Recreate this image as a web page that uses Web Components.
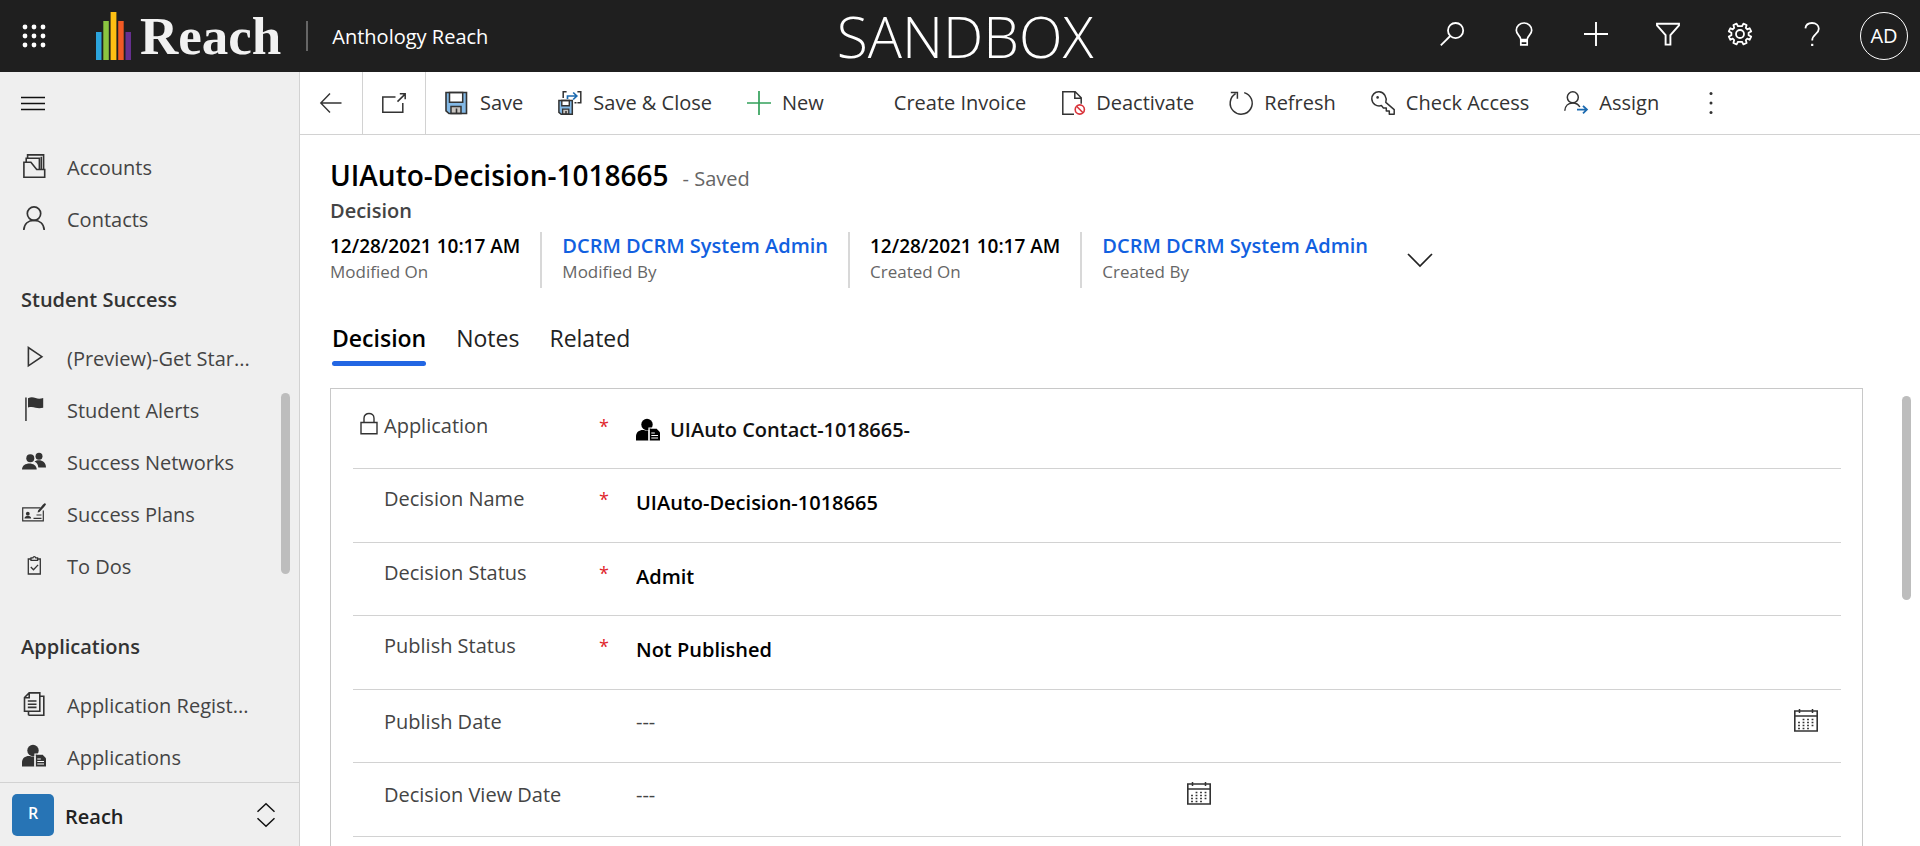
<!DOCTYPE html>
<html lang="en">
<head>
<meta charset="utf-8">
<title>Decision: UIAuto-Decision-1018665 - Anthology Reach</title>
<style>
  html, body { margin: 0; height: 100%; }
  body { font: 20px/28px "Open Sans", "Noto Sans", sans-serif; color: #333; background: #fff; overflow: hidden; }
</style>
</head>
<body>
<reach-app></reach-app>

<script>
const ICONS = {
  waffle: '<g fill="currentColor" stroke="none"><circle cx="3" cy="3" r="2.4"/><circle cx="12" cy="3" r="2.4"/><circle cx="21" cy="3" r="2.4"/><circle cx="3" cy="12" r="2.4"/><circle cx="12" cy="12" r="2.4"/><circle cx="21" cy="12" r="2.4"/><circle cx="3" cy="21" r="2.4"/><circle cx="12" cy="21" r="2.4"/><circle cx="21" cy="21" r="2.4"/></g>',
  search: '<g stroke-width="1.8"><circle cx="15.6" cy="8.6" r="7.6"/><path d="M10.2 14 .8 23.4"/></g>',
  bulb: '<g stroke-width="1.7"><path d="M8.8 17.6C8.8 13.6 4.3 13 4.3 8.2a7.7 7.2 0 0 1 15.4 0c0 4.8-4.5 5.4-4.5 9.4zM8.8 17.6v5.2h6.4v-5.2M8.8 19.4h6.4"/></g>',
  plus: '<path stroke-width="1.9" d="M12 0v24M0 12h24"/>',
  filter: '<path stroke-width="1.9" d="M1 1.8h22v1.6l-8.6 9.8v9.4H9.6v-9.4L1 3.4z"/>',
  gear: '<g stroke-width="1.8" stroke-linejoin="round"><path d="M10 4.2 8.6 1.6 5.4 3l.8 2.9-1.5 1.5L2.4 6.2.8 9.4l2.6 1.3v2.6L.8 14.6l1.6 3.2 2.3-1.2 1.5 1.5-.8 2.9 3.2 1.4L10 19.8h4l1.4 2.6 3.2-1.4-.8-2.9 1.5-1.5 2.3 1.2 1.6-3.2-2.6-1.3v-2.6l2.6-1.3-1.6-3.2-2.3 1.2-1.5-1.5.8-2.9-3.2-1.4L14 4.2z"/><circle cx="12" cy="12" r="4"/></g>',
  help: '<path stroke-width="1.8" d="M5.400 6.400C5.800 2.800 8.600 1 12 1c4 0 6.800 2.300 6.800 5.800 0 5.400-6.600 5.400-6.600 11.600"/><path stroke="none" fill="currentColor" d="M11.100 21.800h2.200V24h-2.200z"/>',
  menu: '<path stroke-width="1.500" d="M0 6.500h24M0 12.500h24M0 18.500h24"/>',
  back: '<path stroke-width="1.400" d="M22.500 12H1.800M11 2.500 1.800 12l9.200 9.500"/>',
  popout: '<path stroke-width="1.500" d="M13.500 6H.8v15.200h20V12M15.500 10.600 22.800 3.400M17.800 2.800h5.400v5.400"/>',
  save: '<path fill="#83b9e6" stroke="none" d="M1 1.500h20v21H3.500L1 20z"/><path fill="#fff" stroke-width="1.500" d="M4.500 1.500h13.200v9.700H4.500z"/><path fill="#c9c5c1" stroke-width="1.500" d="M6 22.500v-7h10v7z"/><path stroke-width="1.600" d="M1 1.500h20.500v21H4L1 19.800zM11.500 17.500v5"/>',
  saveclose: '<path fill="#83b9e6" stroke="none" d="M1 9.500h13v14H3L1 21.500z"/><path fill="#fff" stroke-width="1.400" d="M3.800 9.500h7.500v5.200H3.800z"/><path fill="#c9c5c1" stroke-width="1.300" d="M4.600 23.200v-5h6.200v5z"/><path stroke-width="1.500" d="M.9 9.500h13.400v13.800H3.200L.9 21.400zM8 20v3"/><path stroke-width="1.500" d="M8.600.8H5.200V7M19.400.8h3.400v11h-3.400M16.500 11.800h2"/><path stroke="#1b6ab0" stroke-width="1.700" d="M9.500 8V5h9M15.200 1.500 18.800 5l-3.600 3.500"/>',
  add: '<path stroke="#33a15b" stroke-width="1.700" d="M12 0v24M0 12h24"/>',
  none: '',
  deactivate: '<path stroke-width="1.500" d="M13 23.200H1.800V.8h12.400l6 6v6M13.800.8v6.400h6.400"/><g stroke="#d9333a" stroke-width="1.600" fill="#fff"><circle cx="18.800" cy="18.500" r="4.600"/><path d="m15.600 15.300 6.400 6.400"/></g>',
  refresh: '<path stroke-width="1.500" d="M15.200 1.600A11 11 0 1 1 6.600 2.700M1.800 1.600h6.600v6.200"/>',
  key: '<path stroke-width="1.500" stroke-linejoin="round" d="M14.800 11.400c1.500-5-1.600-10.300-6.700-10.600-4.400-.2-7.500 3.300-7.300 7.200.3 4.800 4.700 7.800 9.600 6.600l2 2.300h2.900v3h3v3.300h4.900v-4.600z"/><circle cx="6.600" cy="6.400" r="1.300" fill="currentColor" stroke="none"/>',
  assign: '<path stroke-width="1.500" d="M.8 19.800C1 14.600 4.500 12 8.800 12c3 0 5.600 1.400 7 4"/><circle cx="8.800" cy="6.300" r="5.500" stroke-width="1.500"/><path stroke="#1b6ab0" stroke-width="1.800" d="M13 18.600h9.800M19 14.900l3.900 3.700-3.900 3.700"/>',
  more: '<g fill="currentColor" stroke="none"><circle cx="12" cy="2.500" r="1.500"/><circle cx="12" cy="12" r="1.500"/><circle cx="12" cy="21.500" r="1.500"/></g>',
  accounts: '<g stroke-width="1.600"><path d="M1.900 23.200V8.200h7l5.800 7.300h8v7.700zM4.200 8V4.300h13.200v11"/><path d="M5.600 4V.9h16V15.300M19.300 15V2.800"/></g>',
  contacts: '<g stroke-width="1.700"><circle cx="12" cy="7.600" r="6.700"/><path d="M1.800 24c.3-6.300 4.600-9.700 10.200-9.700S21.900 17.700 22.200 24"/></g>',
  play: '<path stroke-width="1.600" d="M6.400 2.600v18.200l13.500-9.100z"/>',
  flag: '<path stroke="none" fill="currentColor" d="M3.200.5h1.500V24H3.200zM6 1.200C9 0 11 .2 13.600 1.100c2.600.8 5 .6 7.600 0v9.600c-2.600.6-5 .7-7.600 0-2.600-.8-4.600-1-7.600-.2z"/>',
  people: '<g fill="currentColor" stroke="none"><circle cx="17" cy="7.300" r="3.500"/><path d="M12.500 12.600c4-2.700 11.500-1.300 11.500 5.900h-7.700c-.2-2.700-1.500-4.800-3.800-5.900z"/><circle cx="8.300" cy="9.300" r="4"/><path d="M0 20.500c0-8 14.700-8 14.700 0z"/></g>',
  plans: '<g stroke-width="1.200"><path d="M18.500 6.800H.7v13h20.600V9.500M11.500 17.400h8M14.500 14h5"/></g><g fill="currentColor" stroke="none"><circle cx="5.800" cy="12.700" r="1.900"/><path d="M2.500 17.500c0-3.700 6.700-3.700 6.700 0zM21 3.500l2-1.400 1 1.400-1.700 2.300-4.800 5.100-1.900.6.500-2z"/></g>',
  todo: '<g stroke-width="1.300"><path d="M9 6H6.300v15h12V6h-2.700M9 4.800h1.900c.4-1.600 2.400-1.600 2.800 0h1.900v2.600H9z"/><path d="m8.800 14 2.700 2.800 4.600-4.900"/></g>',
  documents: '<g stroke-width="1.600"><path d="M7.200.9h10.600v18.300H2.500V5.500zM7.200.9v4.800H2.500M6.500 23.200h15.300V4.200h-4"/><path d="M5.800 9h8.700M5.800 12.200h8.700M5.800 15.400h8.700M6.500 19.600v3.600"/></g>',
  applicant: '<g fill="currentColor" stroke="none"><circle cx="11" cy="6.500" r="5.700"/><path d="M0 22.500v-4c0-5 4-7 8-6.500 1.200.8 3.600.8 5 0l-.6.6v9.900z"/><path d="M13.600 10.500h6.800L24 14.200v8.300H13.600z"/></g><path stroke="#fff" stroke-width="1.200" d="M13 22.500V10h7.600M15.300 15h3.500M15.300 17.500h6.700M15.300 20h6.700"/>',
  updown: '<path stroke-width="1.500" d="m3.500 8.700 8.500-8 8.500 8M3.500 15.300l8.500 8 8.500-8"/>',
  chevron: '<path stroke-width="1.700" d="M0 6l12 12L24 6"/>',
  lock: '<g stroke-width="1.400"><path d="M4 10.500h16v11.200H4zM7 10.500V6.300C7 -.2 17 -.2 17 6.300v4.200"/></g>',
  calendar: '<path stroke-width="1.600" d="M.8 3h22.400v20H.8zM.8 8h22.400"/><path stroke-width="1.500" d="M5.500 1v4M18.500 1v4"/><path stroke-width="1.500" stroke-dasharray="1.800 2.700" d="M8.600 11.500h12.500M4.100 14.500h17M4.100 17.500h17M4.100 20.500h12.500"/>'
};

const define = (name, html, setup) => customElements.define(name, class extends HTMLElement {
  constructor() {
    super();
    const template = document.createElement('template');
    template.innerHTML = html;
    this.attachShadow({ mode: 'open' }).append(template.content.cloneNode(true));
  }
  connectedCallback() { if (setup) setup(this, this.shadowRoot); }
});

define('reach-icon', `
<style>
  :host { display: block; flex: none; width: 24px; height: 24px; }
  svg { display: block; width: 100%; height: 100%; overflow: visible; }
</style>
<svg viewBox="0 0 24 24" fill="none" stroke="currentColor" aria-hidden="true"></svg>`,
(host, root) => { root.querySelector('svg').innerHTML = ICONS[host.getAttribute('name')]; });

define('reach-logo', `
<style>
  :host { display: flex; align-items: center; gap: 9px; color: #f1f1f1; }
  svg { display: block; width: 35px; height: 48px; }
  span { font: bold 53px/60px "Liberation Serif", serif; }
</style>
<svg viewBox="0 0 35 48" aria-hidden="true">
  <path fill="#2ba4dc" d="M0 20h5.500v28H0z"/><path fill="#8bc540" d="M7.300 9h5.500v39H7.300z"/>
  <path fill="#fdc013" d="M14.600 0h5.800v48h-5.800z"/><path fill="#f15a24" d="M22.200 9h5.500v39h-5.500z"/>
  <path fill="#66308f" d="M29.500 20H35v28h-5.500z"/>
</svg>
<span>Reach</span>`);

define('top-bar', `
<style>
  :host { display: grid; grid-template-columns: 1fr auto 1fr; align-items: center; height: 72px; padding-left: 10px; background: #1f1f1f; color: #fff; }
  .left, .right { display: flex; align-items: center; }
  .right { justify-content: flex-end; padding-right: 12px; }
  button { display: grid; place-items: center; box-sizing: border-box; width: 72px; height: 72px; margin: 0; padding: 0 0 4px; border: 0; background: none; color: inherit; font: inherit; cursor: pointer; }
  .waffle { width: 48px; padding: 0; }
  reach-logo { margin: 0 25px 0 38px; }
  .app { padding: 2px 0 0 24px; color: inherit; text-decoration: none; }
  .rule { width: 2px; height: 30px; background: #666; }
  .env { font-size: 57px; font-weight: 300; line-height: 72px; }
  .user { width: 48px; height: 48px; margin-left: 12px; padding: 0; border: 1px solid #fff; border-radius: 50%; }
</style>
<div class="left">
  <button class="waffle" aria-label="App launcher"><reach-icon name="waffle"></reach-icon></button>
  <reach-logo></reach-logo>
  <span class="rule"></span>
  <a class="app" href="#">Anthology Reach</a>
</div>
<div class="env">SANDBOX</div>
<div class="right">
  <button aria-label="Search"><reach-icon name="search"></reach-icon></button>
  <button aria-label="Assistant"><reach-icon name="bulb"></reach-icon></button>
  <button aria-label="Quick create"><reach-icon name="plus"></reach-icon></button>
  <button aria-label="Advanced find"><reach-icon name="filter"></reach-icon></button>
  <button aria-label="Settings"><reach-icon name="gear"></reach-icon></button>
  <button aria-label="Help"><reach-icon name="help"></reach-icon></button>
  <button class="user">AD</button>
</div>`);

define('nav-item', `
<style>
  :host { display: block; }
  a { display: flex; align-items: center; gap: 21px; height: 52px; padding: 0 48px 0 22px; color: #444; text-decoration: none; white-space: nowrap; }
  reach-icon { color: #333; margin-bottom: 4px; }
</style>
<a href="#"><reach-icon></reach-icon><span><slot></slot></span></a>`,
(host, root) => {
  const icon = document.createElement('reach-icon');
  icon.setAttribute('name', host.getAttribute('icon'));
  root.querySelector('reach-icon').replaceWith(icon);
});

define('nav-group', `
<style>
  :host { display: block; }
  h2 { margin: 0; padding: 40px 21px 19px; font: inherit; font-weight: 600; color: #333; }
  :host(:not([heading])) h2 { display: none; }
</style>
<h2></h2><slot></slot>`,
(host, root) => { root.querySelector('h2').textContent = host.getAttribute('heading') || ''; });

define('side-nav', `
<style>
  :host { position: relative; box-sizing: border-box; display: flex; flex-direction: column; width: 300px; min-height: 0; border-right: 1px solid #d2d2d2; background: #efefef; }
  button { border: 0; margin: 0; background: none; font: inherit; color: #111; cursor: pointer; }
  .toggle { flex: none; display: flex; align-items: center; height: 70px; padding: 0 21px; }
  .toggle reach-icon { margin-bottom: 8px; }
  nav { flex: 1; min-height: 0; overflow: hidden; }
  .thumb { position: absolute; top: 321px; right: 9px; width: 9px; height: 181px; border-radius: 5px; background: #bdbdbd; }
  .area { flex: none; display: flex; align-items: center; gap: 11px; height: 64px; padding: 0 21px 0 12px; border-top: 1px solid #d2d2d2; }
  .tile { width: 42px; line-height: 38px; padding-bottom: 4px; border-radius: 5px; background: #2774b5; color: #fff; font-size: 16px; font-weight: 600; text-align: center; }
  .name { flex: 1; padding-top: 4px; font-weight: 600; text-align: left; color: #222; }
</style>
<button class="toggle" aria-label="Site map"><reach-icon name="menu"></reach-icon></button>
<nav>
  <nav-group>
    <nav-item icon="accounts">Accounts</nav-item>
    <nav-item icon="contacts">Contacts</nav-item>
  </nav-group>
  <nav-group heading="Student Success">
    <nav-item icon="play">(Preview)-Get Star...</nav-item>
    <nav-item icon="flag">Student Alerts</nav-item>
    <nav-item icon="people">Success Networks</nav-item>
    <nav-item icon="plans">Success Plans</nav-item>
    <nav-item icon="todo">To Dos</nav-item>
  </nav-group>
  <nav-group heading="Applications">
    <nav-item icon="documents">Application Regist...</nav-item>
    <nav-item icon="applicant">Applications</nav-item>
  </nav-group>
</nav>
<div class="thumb"></div>
<button class="area"><span class="tile">R</span><span class="name">Reach</span><reach-icon name="updown"></reach-icon></button>`);

define('command-button', `
<style>
  :host { display: flex; }
  button { display: flex; align-items: center; gap: 11px; padding: 0 17px; margin: 0; border: 0; background: none; color: #333; font: inherit; white-space: nowrap; cursor: pointer; }
  :host([boxed]) button { padding: 0 19px; border-right: 1px solid #d2d2d2; }
  :host([boxed]) span { display: none; }
</style>
<button><reach-icon></reach-icon><span><slot></slot></span></button>`,
(host, root) => {
  const icon = document.createElement('reach-icon');
  icon.setAttribute('name', host.getAttribute('icon'));
  root.querySelector('reach-icon').replaceWith(icon);
  if (host.title) root.querySelector('button').setAttribute('aria-label', host.title);
});

define('command-bar', `
<style>
  :host { display: flex; height: 62px; border-bottom: 1px solid #d2d2d2; }
  .group { display: flex; gap: 1px; padding-left: 2px; }
  .more { display: flex; padding-left: 6px; }
</style>
<command-button boxed icon="back" title="Back"></command-button>
<command-button boxed icon="popout" title="Open in new window"></command-button>
<div class="group">
  <command-button icon="save">Save</command-button>
  <command-button icon="saveclose">Save &amp; Close</command-button>
  <command-button icon="add">New</command-button>
  <command-button icon="none">Create Invoice</command-button>
  <command-button icon="deactivate">Deactivate</command-button>
  <command-button icon="refresh">Refresh</command-button>
  <command-button icon="key">Check Access</command-button>
  <command-button icon="assign">Assign</command-button>
</div>
<div class="more"><command-button icon="more" title="More commands"></command-button></div>`);

define('header-field', `
<style>
  :host { display: block; padding: 0 20px; border-left: 2px solid #d8d8d8; height: 56px; white-space: nowrap; }
  :host(:first-of-type) { padding-left: 0; border-left: 0; }
  .value { font-size: 19px; font-weight: 600; line-height: 28px; color: #000; }
  .label { font-size: 17px; line-height: 24px; color: #666; }
  ::slotted(a) { font-size: 20px; color: #1160e0; text-decoration: none; }
</style>
<div class="value"><slot></slot></div><div class="label"><slot name="label"></slot></div>`);

define('record-header', `
<style>
  :host { display: block; padding: 20px 57px 0 30px; }
  .title { display: flex; align-items: baseline; gap: 14px; }
  h1 { margin: 0; font-size: 28px; line-height: 40px; font-weight: 600; color: #000; }
  .state { color: #666; }
  .entity { font-weight: 600; line-height: 32px; color: #444; }
  .facts { display: flex; margin-top: 5px; }
  button { margin: 0; padding: 0; border: 0; background: none; color: inherit; font: inherit; cursor: pointer; }
  .expand { margin-left: 20px; color: #222; }
  .tabs { display: flex; gap: 30px; margin-top: 34px; padding-left: 2px; }
  .tabs button { font-size: 23px; line-height: 32px; padding-bottom: 12px; color: #222; }
  .tabs .on { font-weight: 600; color: #000; }
  .tabs .on::after { content: ""; display: block; height: 5px; margin: 7px 0 -12px; border-radius: 3px; background: #2266e3; }
</style>
<div class="title"><h1>UIAuto-Decision-1018665</h1><span class="state">- Saved</span></div>
<div class="entity">Decision</div>
<div class="facts">
  <header-field>12/28/2021 10:17 AM<span slot="label">Modified On</span></header-field>
  <header-field><a href="#">DCRM DCRM System Admin</a><span slot="label">Modified By</span></header-field>
  <header-field>12/28/2021 10:17 AM<span slot="label">Created On</span></header-field>
  <header-field><a href="#">DCRM DCRM System Admin</a><span slot="label">Created By</span></header-field>
  <button class="expand" aria-label="More header fields"><reach-icon name="chevron"></reach-icon></button>
</div>
<div class="tabs" role="tablist">
  <button class="on" role="tab" aria-selected="true">Decision</button>
  <button role="tab">Notes</button>
  <button role="tab">Related</button>
</div>`);

define('form-field', `
<style>
  :host { display: grid; grid-template-columns: 31px 215px 37px 1fr; box-sizing: border-box; height: 74px; padding-top: 16px; border-bottom: 1px solid #d2d2d2; }
  :host(:nth-of-type(odd)) { height: 73px; }
  :host([locked]) { height: 80px; padding-top: 23px; }
  :host([kind=date]) { padding-top: 18px; }
  .lock { padding-left: 4px; }
  reach-icon[name=lock] { display: none; }
  :host([locked]) reach-icon[name=lock] { display: block; }
  label { color: #444; }
  .req { font-size: 18px; color: #e0252b; }
  .value { display: flex; align-items: center; gap: 10px; height: 28px; margin-top: 4px; padding-right: 23px; color: #000; }
  :host([kind=date]) .value { margin-top: 0; }
  :host([half]) .value { width: calc(50% - 28px); }
  input, select { flex: 1; min-width: 0; padding: 0; border: 0; background: none; font: inherit; font-weight: 600; color: #000; appearance: none; outline: 0; }
  :host([kind=date]) input { font-weight: 400; color: #444; }
  a { font-weight: 600; color: #111; text-decoration: none; }
  button { padding: 0; border: 0; background: none; color: #333; cursor: pointer; margin-bottom: 4px; }
</style>
<span class="lock"><reach-icon name="lock"></reach-icon></span>
<label for="control"></label>
<span class="req"></span>
<div class="value"></div>`,
(host, root) => {
  const label = host.getAttribute('label'), value = host.getAttribute('value');
  root.querySelector('label').textContent = label;
  if (host.hasAttribute('required')) root.querySelector('.req').textContent = '*';
  root.querySelector('.value').innerHTML = {
    lookup: `<reach-icon name="applicant"></reach-icon><a id="control" href="#">${value}</a>`,
    text: `<input id="control" type="text" value="${value}">`,
    choice: `<select id="control"><option>${value}</option></select>`,
    date: `<input id="control" type="text" value="${value}"><button type="button" aria-label="Pick ${label}"><reach-icon name="calendar"></reach-icon></button>`
  }[host.getAttribute('kind')];
});

define('record-form', `
<style>
  :host { display: block; flex: 1; min-height: 0; overflow: hidden; padding: 22px 57px 0 30px; position: relative; }
  form { box-sizing: border-box; min-height: 100%; padding: 0 21px 0 22px; border: 1px solid #c8c8c8; border-bottom: 0; }
  .thumb { position: absolute; top: 30px; right: 9px; width: 9px; height: 204px; border-radius: 5px; background: #bdbdbd; }
</style>
<form>
  <form-field kind="lookup" locked required label="Application" value="UIAuto Contact-1018665-"></form-field>
  <form-field kind="text" required label="Decision Name" value="UIAuto-Decision-1018665"></form-field>
  <form-field kind="choice" required label="Decision Status" value="Admit"></form-field>
  <form-field kind="choice" required label="Publish Status" value="Not Published"></form-field>
  <form-field kind="date" label="Publish Date" value="---"></form-field>
  <form-field kind="date" half label="Decision View Date" value="---"></form-field>
</form>
<div class="thumb"></div>`);

define('reach-app', `
<style>
  :host { display: grid; grid-template: auto minmax(0, 1fr) / auto minmax(0, 1fr); height: 100vh; }
  top-bar { grid-column: 1 / -1; }
  main { display: flex; flex-direction: column; min-height: 0; }
</style>
<top-bar></top-bar>
<side-nav></side-nav>
<main>
  <command-bar></command-bar>
  <record-header></record-header>
  <record-form></record-form>
</main>`);
</script>
</body>
</html>
